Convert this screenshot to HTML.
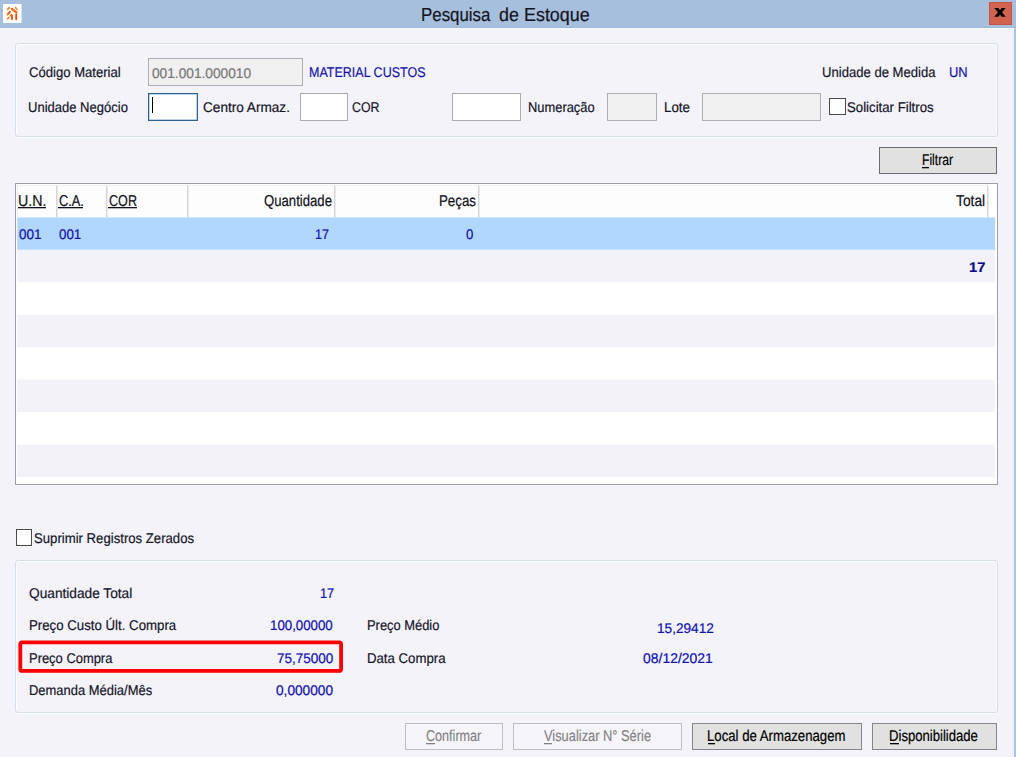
<!DOCTYPE html>
<html lang="pt-BR"><head><meta charset="utf-8"><title>Pesquisa de Estoque</title>
<style>
html,body{margin:0;padding:0;}
body{width:1016px;height:757px;overflow:hidden;position:relative;background:#f4f3fa;font-family:"Liberation Sans", sans-serif;}
.a{position:absolute;}
.t{position:absolute;white-space:nowrap;line-height:1;transform-origin:0 0;display:block;-webkit-text-stroke:0.2px currentColor;text-rendering:geometricPrecision;}
.gb{position:absolute;box-sizing:border-box;border:1px solid #d6dfe6;border-radius:3px;box-shadow:inset 1px 1px 0 #fcfcfe,inset -1px 0 0 #fcfcfe,0 1px 0 #fcfcfe;}
.in{position:absolute;box-sizing:border-box;border:1px solid #abadb3;background:#fff;}
.in.d{background:#f0f0f0;border-color:#b0b0b0;}
.in.f{border-color:#2f6492;box-shadow:inset 0 0 0 0.5px #7fa6c8;}
.cb{position:absolute;box-sizing:border-box;border:1px solid #4a4a4a;background:#fff;}
.bt{position:absolute;box-sizing:border-box;border:1px solid #858585;background:#e1e1e1;}
.bt.df{border-color:#6c6c6c;}
.bt.d{border-color:#bfbfbf;background:#f6f5fb;}
.b{font-weight:bold;}
</style></head><body>
<div class="a" style="left:0;top:0;width:1016px;height:28px;background:#a6bfdc;"></div>
<div class="a" style="left:0;top:27px;width:1016px;height:1px;background:#9fb9d8;"></div>
<div class="a" style="left:0;top:28px;width:1014px;height:1px;background:#f9f8fd;"></div>
<div class="a" style="left:1014px;top:28px;width:2px;height:729px;background:#a8c3e3;"></div>
<svg class="a" style="left:3px;top:4px;" width="19" height="19" viewBox="0 0 19 19"><rect x="0" y="0" width="18.6" height="19" rx="1" fill="#fff"/><g stroke="#ff6a10" stroke-width="2" stroke-linecap="round" fill="none"><path d="M4.6 5.4 L6.2 3.6" stroke="#ff8a2a" stroke-width="1.6"/><path d="M12.6 3.6 L14.0 5.4" stroke="#ff8a2a" stroke-width="1.6"/><path d="M8.8 4.8 L13.6 8.6" stroke-width="2.2"/><path d="M4.8 10.4 L7.0 7.8" stroke-width="2.2"/><path d="M4.6 14.8 L5.8 13.4" stroke="#ff7a20" stroke-width="1.6"/><path d="M7.4 11.8 L8.4 10.6" stroke-width="1.4"/><path d="M9.0 11.4 L9.0 15.2" stroke="#ff5a08" stroke-width="1.9"/><path d="M13.2 10.8 L13.2 15.2" stroke="#ff4a00" stroke-width="1.9"/></g></svg>
<div class="a" style="left:989.1px;top:2.2px;width:22.7px;height:22.4px;box-sizing:border-box;background:#d1644f;border:1px solid #c4533f;"></div>
<svg class="a" style="left:989px;top:2px;" width="23" height="23" viewBox="0 0 23 23"><path d="M5.3 5.9 L9.3 5.9 L16.7 14.8 L12.7 14.8 Z M12.7 5.9 L16.7 5.9 L9.3 14.8 L5.3 14.8 Z" fill="#000"/></svg>
<div class="gb" style="left:15px;top:43px;width:983px;height:94px;"></div>
<div class="gb" style="left:15px;top:560px;width:983px;height:153px;"></div>
<div class="in d" style="left:148px;top:58px;width:155px;height:28px;"></div>
<div class="in f" style="left:148px;top:93px;width:50px;height:28px;"></div>
<div class="a" style="left:152px;top:97px;width:1px;height:16px;background:#000;"></div>
<div class="in" style="left:300px;top:93px;width:48px;height:28px;"></div>
<div class="in" style="left:452px;top:93px;width:69px;height:28px;"></div>
<div class="in d" style="left:607px;top:93px;width:50px;height:28px;"></div>
<div class="in d" style="left:702px;top:93px;width:119px;height:28px;"></div>
<div class="cb" style="left:829px;top:98px;width:17px;height:17px;"></div>
<div class="cb" style="left:16px;top:529px;width:16px;height:17px;"></div>
<div class="bt df" style="left:879px;top:147px;width:118px;height:27px;"></div>
<div class="bt d" style="left:405px;top:723px;width:97.5px;height:27px;"></div>
<div class="bt d" style="left:513px;top:723px;width:169px;height:27px;"></div>
<div class="bt" style="left:692px;top:723px;width:170px;height:27px;"></div>
<div class="bt" style="left:872px;top:723px;width:125px;height:27px;"></div>
<div class="a" style="left:15px;top:183px;width:983px;height:302px;box-sizing:border-box;border:1px solid #9c9fa8;background:#fff;"></div>
<div class="a" style="left:17px;top:185px;width:971px;height:32px;background:#fdfdfd;border-top:1px solid #f1f1f1;border-left:1px solid #ececec;box-sizing:border-box;"></div>
<div class="a" style="left:56px;top:186px;width:1px;height:31px;background:#d6d6d6;"></div>
<div class="a" style="left:57px;top:186px;width:1px;height:31px;background:#e9e9e9;"></div>
<div class="a" style="left:106px;top:186px;width:1px;height:31px;background:#d6d6d6;"></div>
<div class="a" style="left:107px;top:186px;width:1px;height:31px;background:#e9e9e9;"></div>
<div class="a" style="left:187px;top:186px;width:1px;height:31px;background:#d6d6d6;"></div>
<div class="a" style="left:188px;top:186px;width:1px;height:31px;background:#e9e9e9;"></div>
<div class="a" style="left:334px;top:186px;width:1px;height:31px;background:#d6d6d6;"></div>
<div class="a" style="left:335px;top:186px;width:1px;height:31px;background:#e9e9e9;"></div>
<div class="a" style="left:478px;top:186px;width:1px;height:31px;background:#d6d6d6;"></div>
<div class="a" style="left:479px;top:186px;width:1px;height:31px;background:#e9e9e9;"></div>
<div class="a" style="left:987px;top:186px;width:1px;height:31px;background:#d6d6d6;"></div>
<div class="a" style="left:988px;top:186px;width:1px;height:31px;background:#e9e9e9;"></div>
<svg class="a" style="left:17px;top:210px;" width="980" height="276" viewBox="17 210 980 276"><rect x="17.2" y="217.40" width="977.9" height="32.45" fill="#b2d7ff"/><rect x="17.2" y="249.85" width="977.9" height="32.45" fill="#f3f2f9"/><rect x="17.2" y="314.75" width="977.9" height="32.45" fill="#f3f2f9"/><rect x="17.2" y="379.65" width="977.9" height="32.45" fill="#f3f2f9"/><rect x="17.2" y="444.55" width="977.9" height="32.45" fill="#f3f2f9"/></svg>
<svg class="a" style="left:16px;top:638px;" width="332" height="38" viewBox="16 638 332 38"><rect x="20.3" y="642.3" width="320.8" height="28.6" rx="2" ry="2" fill="none" stroke="#ff0000" stroke-width="3.8"/></svg>
<span class="t" id="t1" style="left:421.10px;top:6px;font-size:18.8px;color:#14141e;transform:scaleX(0.8982);">Pesquisa</span>
<span class="t" id="t2" style="left:498.60px;top:6px;font-size:18.8px;color:#14141e;transform:scaleX(0.9489);">de</span>
<span class="t" id="t3" style="left:524.45px;top:6px;font-size:18.8px;color:#14141e;transform:scaleX(0.9530);">Estoque</span>
<span class="t" id="l_cod" style="left:29.30px;top:65px;font-size:14.1px;color:#141428;transform:scaleX(0.9293);">Código Material</span>
<span class="t" id="v_cod" style="left:151.70px;top:66px;font-size:14.1px;color:#787878;transform:scaleX(0.9720);">001.001.000010</span>
<span class="t" id="v_mat" style="left:309.11px;top:65px;font-size:14.1px;color:#1414ac;transform:scaleX(0.8871);">MATERIAL CUSTOS</span>
<span class="t" id="l_um" style="left:822.37px;top:65px;font-size:14.1px;color:#141428;transform:scaleX(0.9284);">Unidade de Medida</span>
<span class="t" id="v_um" style="left:948.98px;top:65px;font-size:14.1px;color:#1414ac;transform:scaleX(0.9177);">UN</span>
<span class="t" id="l_un" style="left:28.38px;top:100px;font-size:14.1px;color:#141428;transform:scaleX(0.9237);">Unidade Negócio</span>
<span class="t" id="l_ca" style="left:202.80px;top:100px;font-size:14.1px;color:#141428;transform:scaleX(0.9651);">Centro Armaz.</span>
<span class="t" id="l_cor" style="left:351.70px;top:100px;font-size:14.1px;color:#141428;transform:scaleX(0.8767);">COR</span>
<span class="t" id="l_num" style="left:528.48px;top:100px;font-size:14.1px;color:#141428;transform:scaleX(0.9151);">Numeração</span>
<span class="t" id="l_lot" style="left:664.25px;top:100px;font-size:14.1px;color:#141428;transform:scaleX(0.9476);">Lote</span>
<span class="t" id="l_sol" style="left:846.90px;top:100px;font-size:14.1px;color:#141428;transform:scaleX(0.9376);">Solicitar Filtros</span>
<span class="t" id="b_fil" style="left:921.52px;top:153px;font-size:15.6px;color:#000;transform:scaleX(0.7787);">Filtrar</span>
<span class="t" id="h_un" style="left:18.29px;top:194px;font-size:15.7px;color:#10101c;transform:scaleX(0.9064);">U.N.</span>
<div class="a" style="left:18px;top:207px;width:28px;height:1px;background:#10101c;"></div>
<div class="a" style="left:18px;top:208px;width:28px;height:1px;background:#10101c;opacity:.3;"></div>
<span class="t" id="h_ca" style="left:58.60px;top:194px;font-size:15.7px;color:#10101c;transform:scaleX(0.8164);">C.A.</span>
<div class="a" style="left:58px;top:207px;width:25px;height:1px;background:#10101c;"></div>
<div class="a" style="left:58px;top:208px;width:25px;height:1px;background:#10101c;opacity:.3;"></div>
<span class="t" id="h_cor" style="left:108.50px;top:194px;font-size:15.7px;color:#10101c;transform:scaleX(0.8022);">COR</span>
<div class="a" style="left:108px;top:207px;width:29px;height:1px;background:#10101c;"></div>
<div class="a" style="left:108px;top:208px;width:29px;height:1px;background:#10101c;opacity:.3;"></div>
<span class="t" id="h_qtd" style="left:263.80px;top:194px;font-size:15.7px;color:#10101c;transform:scaleX(0.8379);">Quantidade</span>
<span class="t" id="h_pec" style="left:438.95px;top:194px;font-size:15.7px;color:#10101c;transform:scaleX(0.8467);">Peças</span>
<span class="t" id="h_tot" style="left:956.20px;top:194px;font-size:15.7px;color:#10101c;transform:scaleX(0.8790);">Total</span>
<span class="t" id="r_un" style="left:19.00px;top:227px;font-size:14px;color:#1010b4;transform:scaleX(0.9630);">001</span>
<span class="t" id="r_ca" style="left:59.30px;top:227px;font-size:14px;color:#1010b4;transform:scaleX(0.9503);">001</span>
<span class="t" id="r_q" style="left:314.50px;top:227px;font-size:14px;color:#1010b4;transform:scaleX(0.8995);">17</span>
<span class="t" id="r_p" style="left:466.00px;top:227px;font-size:14px;color:#1010b4;transform:scaleX(0.9375);">0</span>
<span class="t b" id="r_tot" style="left:969.00px;top:260px;font-size:14px;color:#0a0a8c;transform:scaleX(1.0452);">17</span>
<span class="t" id="c_sup" style="left:33.90px;top:531px;font-size:14.1px;color:#141428;transform:scaleX(0.9331);">Suprimir Registros Zerados</span>
<span class="t" id="g_qt" style="left:29.40px;top:586px;font-size:14.1px;color:#141428;transform:scaleX(0.9715);">Quantidade Total</span>
<span class="t" id="g_qtv" style="left:320.29px;top:586px;font-size:14px;color:#1010b4;transform:scaleX(0.9063);">17</span>
<span class="t" id="g_pc" style="left:29.16px;top:618px;font-size:14.1px;color:#141428;transform:scaleX(0.9396);">Preço Custo Últ. Compra</span>
<span class="t" id="g_pcv" style="left:270.45px;top:618px;font-size:14px;color:#1010b4;transform:scaleX(0.9481);">100,00000</span>
<span class="t" id="g_pm" style="left:367.09px;top:618px;font-size:14.1px;color:#141428;transform:scaleX(0.9147);">Preço Médio</span>
<span class="t" id="g_pmv" style="left:657.03px;top:621px;font-size:14px;color:#1010b4;transform:scaleX(0.9738);">15,29412</span>
<span class="t" id="g_pp" style="left:29.18px;top:651px;font-size:14.1px;color:#141428;transform:scaleX(0.9176);">Preço Compra</span>
<span class="t" id="g_ppv" style="left:277.00px;top:651px;font-size:14px;color:#1010b4;transform:scaleX(0.9641);">75,75000</span>
<span class="t" id="g_dc" style="left:367.36px;top:651px;font-size:14.1px;color:#141428;transform:scaleX(0.9364);">Data Compra</span>
<span class="t" id="g_dcv" style="left:643.40px;top:651px;font-size:14px;color:#1010b4;transform:scaleX(0.9974);">08/12/2021</span>
<span class="t" id="g_dm" style="left:29.38px;top:683px;font-size:14.1px;color:#141428;transform:scaleX(0.9194);">Demanda Média/Mês</span>
<span class="t" id="g_dmv" style="left:276.30px;top:683px;font-size:14px;color:#1010b4;transform:scaleX(0.9760);">0,000000</span>
<span class="t" id="b_con" style="left:425.90px;top:729px;font-size:15.6px;color:#848484;transform:scaleX(0.8072);">Confirmar</span>
<span class="t" id="b_vis" style="left:544.00px;top:729px;font-size:15.6px;color:#848484;transform:scaleX(0.8242);">Visualizar N° Série</span>
<span class="t" id="b_loc" style="left:706.65px;top:729px;font-size:15.6px;color:#000;transform:scaleX(0.8451);">Local de Armazenagem</span>
<span class="t" id="b_dis" style="left:888.66px;top:729px;font-size:15.6px;color:#000;transform:scaleX(0.8406);">Disponibilidade</span>
<div class="a" style="left:922px;top:167px;width:7px;height:1px;background:#000;"></div>
<div class="a" style="left:922px;top:168px;width:7px;height:1px;background:#000;opacity:.3;"></div>
<div class="a" style="left:426px;top:743px;width:9px;height:1px;background:#848484;"></div>
<div class="a" style="left:426px;top:744px;width:9px;height:1px;background:#848484;opacity:.3;"></div>
<div class="a" style="left:544px;top:743px;width:8px;height:1px;background:#848484;"></div>
<div class="a" style="left:544px;top:744px;width:8px;height:1px;background:#848484;opacity:.3;"></div>
<div class="a" style="left:708px;top:743px;width:7px;height:1px;background:#000;"></div>
<div class="a" style="left:708px;top:744px;width:7px;height:1px;background:#000;opacity:.3;"></div>
<div class="a" style="left:890px;top:743px;width:9px;height:1px;background:#000;"></div>
<div class="a" style="left:890px;top:744px;width:9px;height:1px;background:#000;opacity:.3;"></div>
</body></html>
